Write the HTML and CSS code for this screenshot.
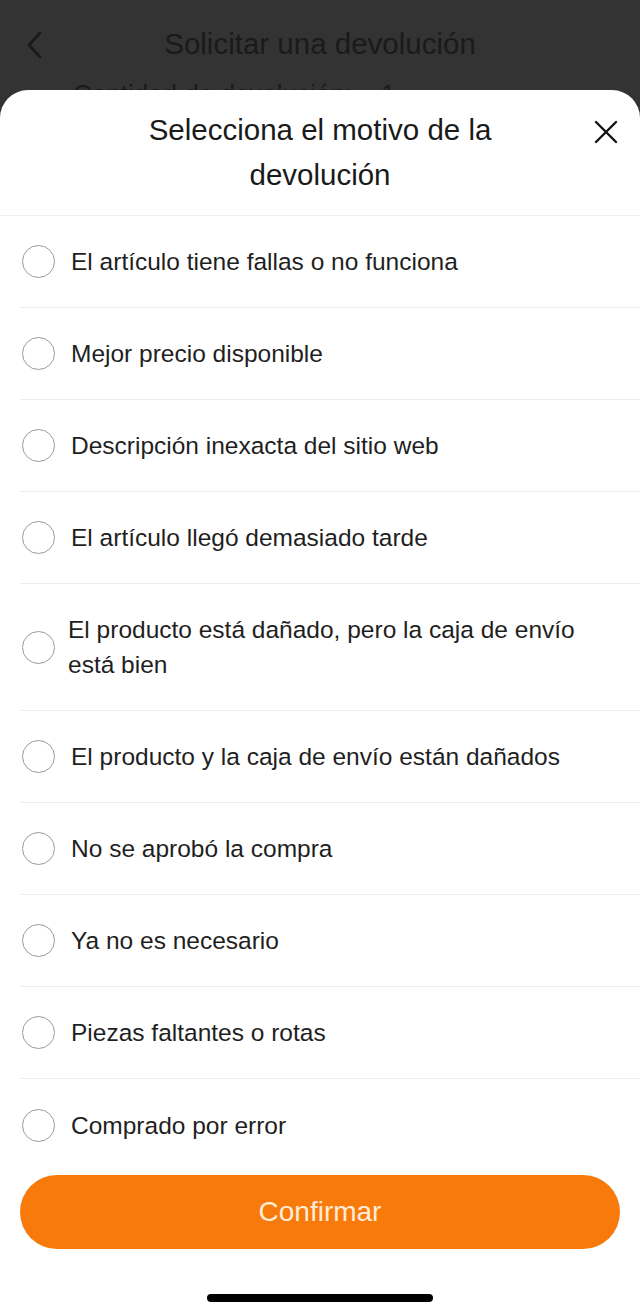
FILE: index.html
```html
<!DOCTYPE html>
<html lang="es">
<head>
<meta charset="utf-8">
<title>Solicitar una devolución</title>
<link rel="stylesheet" href="styles.css">
</head>
<body>
<div class="backdrop">
  <div class="nav">
    <svg class="back" width="18" height="28" viewBox="0 0 18 28"><path d="M14 2 L3 14 L14 26" fill="none" stroke="#1a1a1a" stroke-width="2.6" stroke-linecap="round" stroke-linejoin="round"/></svg>
    <div class="nav-title">Solicitar una devolución</div>
  </div>
  <div class="peek"><span>Cantidad de devolución:</span><span class="qty">1</span></div>
</div>
<div class="sheet">
  <div class="sheet-head">
    <div class="sheet-title">Selecciona el motivo de la devolución</div>
    <svg class="close" width="24" height="24" viewBox="0 0 24 24"><path d="M2 2 L22 22 M22 2 L2 22" stroke="#111" stroke-width="2.4" stroke-linecap="round"/></svg>
  </div>
  <ul class="list">
    <li class="row"><span class="radio"></span><span class="label">El artículo tiene fallas o no funciona</span></li>
    <li class="row"><span class="radio"></span><span class="label">Mejor precio disponible</span></li>
    <li class="row"><span class="radio"></span><span class="label">Descripción inexacta del sitio web</span></li>
    <li class="row"><span class="radio"></span><span class="label">El artículo llegó demasiado tarde</span></li>
    <li class="row tall"><span class="radio"></span><span class="label">El producto está dañado, pero la caja de envío está bien</span></li>
    <li class="row"><span class="radio"></span><span class="label">El producto y la caja de envío están dañados</span></li>
    <li class="row"><span class="radio"></span><span class="label">No se aprobó la compra</span></li>
    <li class="row"><span class="radio"></span><span class="label">Ya no es necesario</span></li>
    <li class="row"><span class="radio"></span><span class="label">Piezas faltantes o rotas</span></li>
    <li class="row last"><span class="radio"></span><span class="label">Comprado por error</span></li>
  </ul>
  <div class="actions">
    <button class="confirm">Confirmar</button>
  </div>
  <div class="home-bar"><span></span></div>
</div>
</body>
</html>
```
FILE: styles.css
```css
* { box-sizing: border-box; }
html, body { margin: 0; padding: 0; }
body {
  background: #333333;
  font-family: "Liberation Sans", Arial, sans-serif;
  width: 640px;
  height: 1316px;
  overflow: hidden;
}
.backdrop {
  height: 90px;
  overflow: hidden;
  position: relative;
}
.nav {
  height: 80px;
  display: flex;
  align-items: center;
  justify-content: center;
  position: relative;
  padding-top: 8px;
}
.back {
  position: absolute;
  left: 26px;
  top: 31px;
}
.nav-title {
  font-size: 29.5px;
  color: #1a1a1a;
}
.peek {
  font-size: 26px;
  line-height: 30px;
  color: #1a1a1a;
  padding-left: 73px;
  margin-top: -1px;
  display: flex;
}
.peek .qty {
  margin-left: 29px;
}
.sheet {
  background: #ffffff;
  border-radius: 28px 28px 0 0;
  height: 1226px;
  display: flex;
  flex-direction: column;
}
.sheet-head {
  position: relative;
  padding: 17px 130px 18px;
  border-bottom: 1px solid #efefef;
}
.sheet-title {
  text-align: center;
  font-size: 29.5px;
  line-height: 45px;
  color: #1a1a1a;
}
.close {
  position: absolute;
  right: 22px;
  top: 30px;
}
.list {
  list-style: none;
  margin: 0;
  padding: 0;
}
.row {
  margin-left: 20px;
  height: 92px;
  border-bottom: 1px solid #ececec;
  display: flex;
  align-items: center;
}
.row.tall {
  height: 127px;
}
.row.last {
  border-bottom: none;
}
.radio {
  flex: none;
  width: 33px;
  height: 33px;
  margin-left: 2px;
  border: 1.8px solid #9a9a9a;
  border-radius: 50%;
}
.label {
  margin-left: 16px;
  font-size: 24.5px;
  line-height: 35px;
  color: #1f1f1f;
  padding-right: 50px;
}
.tall .label {
  margin-left: 13px;
}
.actions {
  padding: 4px 20px 0;
}
.confirm {
  width: 100%;
  height: 74px;
  border: none;
  border-radius: 37px;
  background: #f77a0b;
  color: #ffecd6;
  font-family: "Liberation Sans", Arial, sans-serif;
  font-size: 28px;
}
.home-bar {
  display: flex;
  justify-content: center;
  padding-top: 45px;
}
.home-bar span {
  width: 226px;
  height: 8px;
  border-radius: 4px;
  background: #000;
}
```
